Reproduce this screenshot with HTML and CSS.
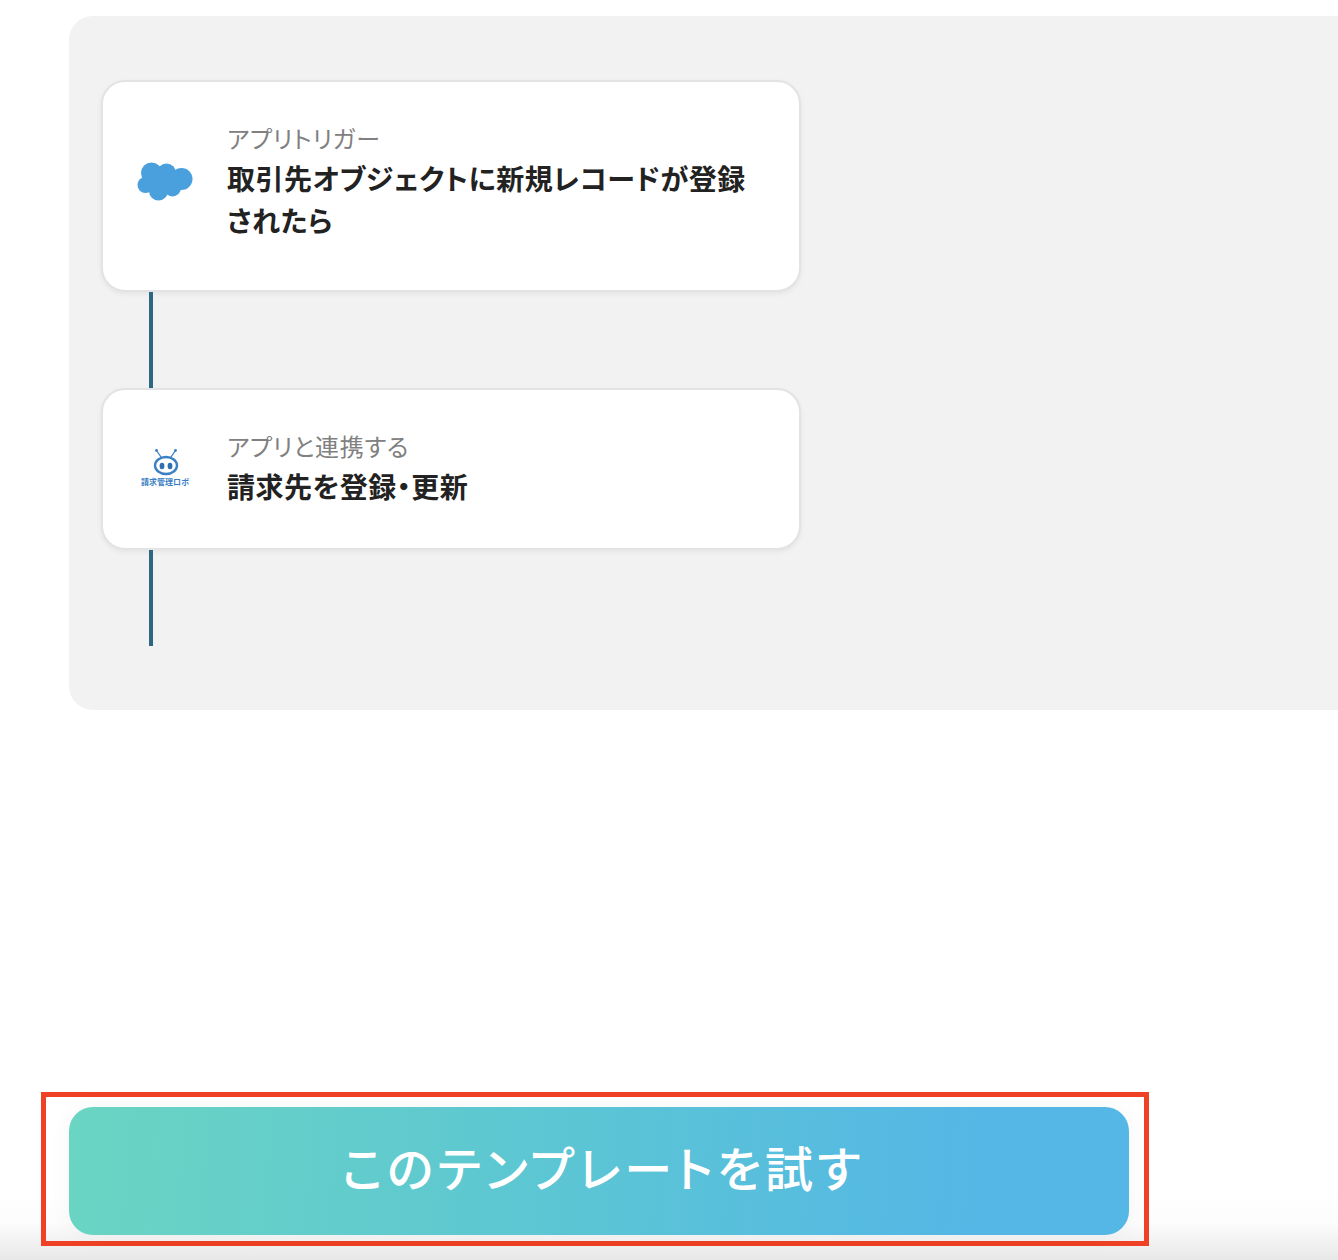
FILE: index.html
```html
<!DOCTYPE html>
<html lang="ja">
<head>
  <meta charset="UTF-8" />
  <title>このテンプレートを試す</title>
  <link rel="stylesheet" href="styles.css">
</head>
<body>
  <div class="flow-panel">
    <div class="flow-card flow-card-tall">
      <div class="flow-row">
        <div class="flow-icon">
          <svg width="56" height="40" viewBox="-0.5 -1 56 40" fill="#49a0dc">
            <circle cx="14" cy="11" r="10.5" />
            <circle cx="29" cy="11" r="9.5" />
            <circle cx="44" cy="17" r="11" />
            <circle cx="8" cy="23" r="8" />
            <circle cx="21" cy="29" r="9.5" />
            <circle cx="35" cy="26" r="8.5" />
            <rect x="10" y="10" width="34" height="18" />
          </svg>
        </div>
        <div class="flow-text">
          <p class="flow-label">アプリトリガー</p>
          <p class="flow-title">取引先オブジェクトに新規レコードが登録されたら</p>
        </div>
      </div>
    </div>
    <div class="flow-line"></div>
    <div class="flow-card">
      <div class="flow-row">
        <div class="flow-icon">
          <svg width="30" height="28" viewBox="0 0 30 28">
            <path d="M11 9 6.5 2.5M21 9l4.500-6.500" stroke="#3b7fc4" stroke-width="1.3" fill="none" />
            <circle cx="6.500" cy="2.500" r="1.400" fill="#3b7fc4" />
            <circle cx="25.500" cy="2.500" r="1.400" fill="#3b7fc4" />
            <ellipse cx="16" cy="17.500" rx="11" ry="8.500" fill="#fff" stroke="#3b7fc4" stroke-width="2.400" />
            <ellipse cx="12" cy="18" rx="2.400" ry="3.200" fill="#2f6fb0" />
            <ellipse cx="20" cy="18" rx="2.400" ry="3.200" fill="#2f6fb0" />
          </svg>
          <span class="robot-name">請求管理ロボ</span>
        </div>
        <div class="flow-text">
          <p class="flow-label">アプリと連携する</p>
          <p class="flow-title">請求先を登録・更新</p>
        </div>
      </div>
    </div>
    <div class="flow-line"></div>
  </div>

  <div class="cta-bar">
    <div class="cta-frame">
      <a class="cta-button" href="#">このテンプレートを試す</a>
    </div>
  </div>
</body>
</html>
```

FILE: styles.css
```css
html,
body {
  margin: 0;
  height: 1260px;
  overflow: hidden;
}
body {
  font-family: "Noto Sans CJK JP", "Noto Sans", sans-serif;
  font-feature-settings: "palt";
  background-color: #fff;
  color: #222;
}
.flow-panel {
  margin: 16px 0 0 69px;
  width: 1300px;
  height: 694px;
  box-sizing: border-box;
  padding: 64px 32px 0;
  background-color: #f2f2f2;
  border-radius: 24px;
}
.flow-card {
  box-sizing: border-box;
  width: 700px;
  height: 162px;
  padding: 38px 34px 0;
  background-color: #fff;
  border: 2px solid #e3e3e3;
  border-radius: 24px;
  box-shadow: 0 2px 5px rgba(0, 0, 0, 0.06);
}
.flow-card-tall {
  height: 212px;
}
.flow-row {
  display: flex;
  align-items: center;
}
.flow-icon {
  display: flex;
  flex-direction: column;
  align-items: center;
  flex: none;
  width: 56px;
  margin-right: 34px;
}
.robot-name {
  font-size: 8px;
  font-weight: 700;
  line-height: 11px;
  color: #3b7fc4;
  white-space: nowrap;
}
.flow-text {
  flex: 1;
}
.flow-label {
  margin: 1px 0 0;
  font-size: 24px;
  line-height: 34px;
  letter-spacing: 0.7px;
  color: #808080;
}
.flow-title {
  margin: 2px 0 0;
  font-size: 28px;
  font-weight: 700;
  line-height: 42px;
  letter-spacing: 0.5px;
  color: #222;
}
.flow-line {
  width: 4px;
  height: 96px;
  margin-left: 48px;
  background-color: #2d6786;
}
.cta-bar {
  height: 168px;
  margin-top: 382px;
  box-sizing: border-box;
  padding-left: 41px;
  background: linear-gradient(to bottom, #fff 0, #fff 60%, #fcfcfc 78%, #e8e8e8 100%);
}
.cta-frame {
  box-sizing: border-box;
  width: 1108px;
  height: 154px;
  padding: 10px 15px 6px 23px;
  border: 5px solid #ee4125;
}
.cta-button {
  display: block;
  height: 128px;
  padding-left: 8px;
  box-sizing: border-box;
  line-height: 118px;
  text-align: center;
  font-size: 48px;
  font-weight: 500;
  letter-spacing: 4px;
  color: #fff;
  text-decoration: none;
  border-radius: 24px;
  background: linear-gradient(95deg, #6ad5c2 0%, #5cc6d3 45%, #54b7e5 85%, #54b7e5 100%);
  box-shadow: 0 0 24px rgba(0, 0, 0, 0.04);
}
```
